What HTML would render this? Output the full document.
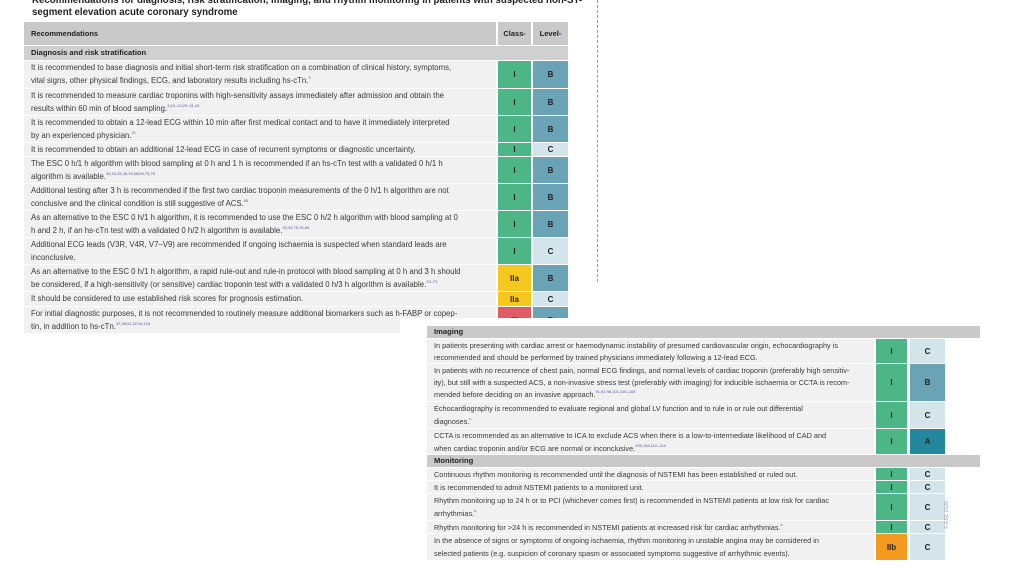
<!DOCTYPE html>
<html><head><meta charset="utf-8"><style>
body{margin:0;width:1024px;height:574px;background:#fff;position:relative;overflow:hidden;font-family:"Liberation Sans",sans-serif;color:#333}
.a{position:absolute;box-sizing:border-box}
.t{font-size:7.3px;line-height:12.5px;padding:1px 0 0 7px;background:#f1f1f1;color:#3a3a3a;white-space:nowrap}
.L{font-size:7.8px}
.s{font-size:7.6px;font-weight:bold;background:#c9c9c9;padding:0 0 0 7px;color:#222}
.b{display:flex;align-items:center;justify-content:center;font-weight:bold;font-size:8px;color:#222}
.g{background:#4db686}.B{background:#6aa2b6}.C{background:#d3e4ea}.A{background:#23889e}.y{background:#f6c71c}.o{background:#f39a1f}.r{background:#e45a64}
sup{font-size:4px;color:#5a5aa0;line-height:0;vertical-align:4px}
</style></head><body>
<div class="a" style="left:32px;top:-5px;font-size:9.7px;font-weight:bold;line-height:12px;color:#222;white-space:nowrap">Recommendations for diagnosis, risk stratification, imaging, and rhythm monitoring in patients with suspected non-ST-<br>segment elevation acute coronary syndrome</div>
<div class="a" style="left:597px;top:0;height:282px;border-left:1px dashed #999"></div>

<div class="a s" style="left:24px;top:22px;width:472px;height:23px;line-height:23px;font-size:7.5px">Recommendations</div>
<div class="a s b" style="left:498px;top:22px;width:33px;height:23px;font-size:7.5px;padding:0">Class<sup>a</sup></div>
<div class="a s b" style="left:533px;top:22px;width:35px;height:23px;font-size:7.5px;padding:0">Level<sup>b</sup></div>
<div class="a s" style="left:24px;top:46px;width:544px;height:14px;line-height:14px;background:#d0d0d0">Diagnosis and risk stratification</div>

<div class="a t L" style="left:24px;top:61px;width:472px;height:27px">It is recommended to base diagnosis and initial short-term risk stratification on a combination of clinical history, symptoms,<br>vital signs, other physical findings, ECG, and laboratory results including hs-cTn.<sup>3</sup></div>
<div class="a b g" style="left:498px;top:61px;width:33px;height:27px">I</div><div class="a b B" style="left:533px;top:61px;width:35px;height:27px">B</div>
<div class="a t L" style="left:24px;top:89px;width:472px;height:26px">It is recommended to measure cardiac troponins with high-sensitivity assays immediately after admission and obtain the<br>results within 60 min of blood sampling.<sup>3,10–13,29–31,34</sup></div>
<div class="a b g" style="left:498px;top:89px;width:33px;height:26px">I</div><div class="a b B" style="left:533px;top:89px;width:35px;height:26px">B</div>
<div class="a t L" style="left:24px;top:116px;width:472px;height:26px">It is recommended to obtain a 12-lead ECG within 10 min after first medical contact and to have it immediately interpreted<br>by an experienced physician.<sup>21</sup></div>
<div class="a b g" style="left:498px;top:116px;width:33px;height:26px">I</div><div class="a b B" style="left:533px;top:116px;width:35px;height:26px">B</div>
<div class="a t L" style="left:24px;top:143px;width:472px;height:13px;line-height:12px">It is recommended to obtain an additional 12-lead ECG in case of recurrent symptoms or diagnostic uncertainty.</div>
<div class="a b g" style="left:498px;top:143px;width:33px;height:13px">I</div><div class="a b C" style="left:533px;top:143px;width:35px;height:13px">C</div>
<div class="a t L" style="left:24px;top:157px;width:472px;height:26px">The ESC 0 h/1 h algorithm with blood sampling at 0 h and 1 h is recommended if an hs-cTn test with a validated 0 h/1 h<br>algorithm is available.<sup>30,33,35,36,39,68,69,75,76</sup></div>
<div class="a b g" style="left:498px;top:157px;width:33px;height:26px">I</div><div class="a b B" style="left:533px;top:157px;width:35px;height:26px">B</div>
<div class="a t L" style="left:24px;top:184px;width:472px;height:26px">Additional testing after 3 h is recommended if the first two cardiac troponin measurements of the 0 h/1 h algorithm are not<br>conclusive and the clinical condition is still suggestive of ACS.<sup>85</sup></div>
<div class="a b g" style="left:498px;top:184px;width:33px;height:26px">I</div><div class="a b B" style="left:533px;top:184px;width:35px;height:26px">B</div>
<div class="a t L" style="left:24px;top:211px;width:472px;height:26px">As an alternative to the ESC 0 h/1 h algorithm, it is recommended to use the ESC 0 h/2 h algorithm with blood sampling at 0<br>h and 2 h, if an hs-cTn test with a validated 0 h/2 h algorithm is available.<sup>33,39,75,78,84</sup></div>
<div class="a b g" style="left:498px;top:211px;width:33px;height:26px">I</div><div class="a b B" style="left:533px;top:211px;width:35px;height:26px">B</div>
<div class="a t L" style="left:24px;top:238px;width:472px;height:26px">Additional ECG leads (V3R, V4R, V7–V9) are recommended if ongoing ischaemia is suspected when standard leads are<br>inconclusive.</div>
<div class="a b g" style="left:498px;top:238px;width:33px;height:26px">I</div><div class="a b C" style="left:533px;top:238px;width:35px;height:26px">C</div>
<div class="a t L" style="left:24px;top:265px;width:472px;height:26px">As an alternative to the ESC 0 h/1 h algorithm, a rapid rule-out and rule-in protocol with blood sampling at 0 h and 3 h should<br>be considered, if a high-sensitivity (or sensitive) cardiac troponin test with a validated 0 h/3 h algorithm is available.<sup>70–73</sup></div>
<div class="a b y" style="left:498px;top:265px;width:33px;height:26px">IIa</div><div class="a b B" style="left:533px;top:265px;width:35px;height:26px">B</div>
<div class="a t L" style="left:24px;top:292px;width:472px;height:14px">It should be considered to use established risk scores for prognosis estimation.</div>
<div class="a b y" style="left:498px;top:292px;width:33px;height:14px">IIa</div><div class="a b C" style="left:533px;top:292px;width:35px;height:14px">C</div>
<div class="a t L" style="left:24px;top:307px;width:472px;height:26px">For initial diagnostic purposes, it is not recommended to routinely measure additional biomarkers such as h-FABP or copep-<br>tin, in addition to hs-cTn.<sup>47,48,51,52,54,118</sup></div>
<div class="a b r" style="left:498px;top:307px;width:33px;height:26px">III</div><div class="a b B" style="left:533px;top:307px;width:35px;height:26px">B</div>
<div class="a" style="left:400px;top:318px;width:624px;height:256px;background:#fff"></div>

<div class="a s" style="left:427px;top:326px;width:553px;height:12px;line-height:12px">Imaging</div>
<div class="a t" style="left:427px;top:339px;width:447px;height:24px;line-height:11.5px">In patients presenting with cardiac arrest or haemodynamic instability of presumed cardiovascular origin, echocardiography is<br>recommended and should be performed by trained physicians immediately following a 12-lead ECG.</div>
<div class="a b g" style="left:876px;top:339px;width:31px;height:24px">I</div><div class="a b C" style="left:910px;top:339px;width:35px;height:24px">C</div>
<div class="a t" style="left:427px;top:364px;width:447px;height:37px;line-height:12px">In patients with no recurrence of chest pain, normal ECG findings, and normal levels of cardiac troponin (preferably high sensitiv-<br>ity), but still with a suspected ACS, a non-invasive stress test (preferably with imaging) for inducible ischaemia or CCTA is recom-<br>mended before deciding on an invasive approach.<sup>91,92,98,101,105–108</sup></div>
<div class="a b g" style="left:876px;top:364px;width:31px;height:37px">I</div><div class="a b B" style="left:910px;top:364px;width:35px;height:37px">B</div>
<div class="a t" style="left:427px;top:402px;width:447px;height:26px">Echocardiography is recommended to evaluate regional and global LV function and to rule in or rule out differential<br>diagnoses.<sup>c</sup></div>
<div class="a b g" style="left:876px;top:402px;width:31px;height:26px">I</div><div class="a b C" style="left:910px;top:402px;width:35px;height:26px">C</div>
<div class="a t" style="left:427px;top:429px;width:447px;height:25px">CCTA is recommended as an alternative to ICA to exclude ACS when there is a low-to-intermediate likelihood of CAD and<br>when cardiac troponin and/or ECG are normal or inconclusive.<sup>105,108,110–114</sup></div>
<div class="a b g" style="left:876px;top:429px;width:31px;height:25px">I</div><div class="a b A" style="left:910px;top:429px;width:35px;height:25px">A</div>
<div class="a s" style="left:427px;top:455px;width:553px;height:12px;line-height:12px">Monitoring</div>
<div class="a t" style="left:427px;top:468px;width:447px;height:12px;line-height:11px">Continuous rhythm monitoring is recommended until the diagnosis of NSTEMI has been established or ruled out.</div>
<div class="a b g" style="left:876px;top:468px;width:31px;height:12px">I</div><div class="a b C" style="left:910px;top:468px;width:35px;height:12px">C</div>
<div class="a t" style="left:427px;top:481px;width:447px;height:12px;line-height:11px">It is recommended to admit NSTEMI patients to a monitored unit.</div>
<div class="a b g" style="left:876px;top:481px;width:31px;height:12px">I</div><div class="a b C" style="left:910px;top:481px;width:35px;height:12px">C</div>
<div class="a t" style="left:427px;top:494px;width:447px;height:26px">Rhythm monitoring up to 24 h or to PCI (whichever comes first) is recommended in NSTEMI patients at low risk for cardiac<br>arrhythmias.<sup>d</sup></div>
<div class="a b g" style="left:876px;top:494px;width:31px;height:26px">I</div><div class="a b C" style="left:910px;top:494px;width:35px;height:26px">C</div>
<div class="a t" style="left:427px;top:521px;width:447px;height:12px;line-height:11px">Rhythm monitoring for &gt;24 h is recommended in NSTEMI patients at increased risk for cardiac arrhythmias.<sup>e</sup></div>
<div class="a b g" style="left:876px;top:521px;width:31px;height:12px">I</div><div class="a b C" style="left:910px;top:521px;width:35px;height:12px">C</div>
<div class="a t" style="left:427px;top:534px;width:447px;height:26px">In the absence of signs or symptoms of ongoing ischaemia, rhythm monitoring in unstable angina may be considered in<br>selected patients (e.g. suspicion of coronary spasm or associated symptoms suggestive of arrhythmic events).</div>
<div class="a b o" style="left:876px;top:534px;width:31px;height:26px">IIb</div><div class="a b C" style="left:910px;top:534px;width:35px;height:26px">C</div>
<div class="a" style="left:933px;top:512px;font-size:5px;color:#999;transform:rotate(-90deg);white-space:nowrap">© ESC 2020</div>
</body></html>
